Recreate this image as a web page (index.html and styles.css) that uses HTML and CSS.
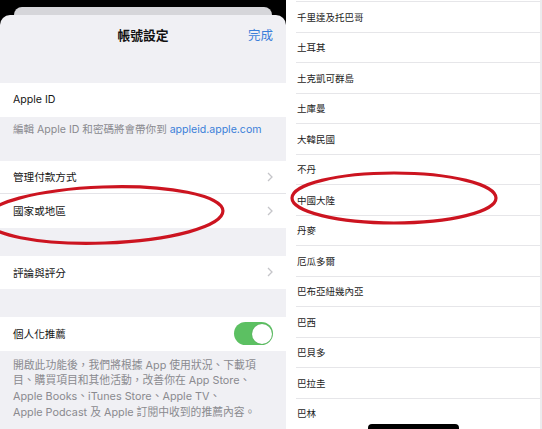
FILE: index.html
```html
<!DOCTYPE html>
<html>
<head>
    <meta charset="UTF-8">
    <title>帳號設定</title>
    <link rel="stylesheet" href="styles.css">
</head>
<body>
    <div class="screen">
        <div class="phone-left">
            <div class="back-card"></div>
            <div class="sheet">
                <div class="nav">
                    <span></span>
                    <span class="nav-title">帳號設定</span>
                    <span class="nav-done">完成</span>
                </div>

                <div class="cell">Apple ID</div>
                <p class="note note-top">編輯 Apple ID 和密碼將會帶你到 <span class="link">appleid.apple.com</span></p>

                <div class="cell cell-split">
                    <span>管理付款方式</span>
                    <svg class="chevron" viewBox="0 0 6 10"><polyline points="1,1 5,5 1,9"/></svg>
                </div>
                <div class="cell">
                    <span>國家或地區</span>
                    <svg class="chevron" viewBox="0 0 6 10"><polyline points="1,1 5,5 1,9"/></svg>
                </div>

                <div class="cell cell-gap">
                    <span>評論與評分</span>
                    <svg class="chevron" viewBox="0 0 6 10"><polyline points="1,1 5,5 1,9"/></svg>
                </div>

                <div class="cell cell-gap">
                    <span>個人化推薦</span>
                    <div class="toggle"><div class="knob"></div></div>
                </div>
                <p class="note note-bottom">開啟此功能後，我們將根據 App 使用狀況、下載項<br>目、購買項目和其他活動，改善你在 App Store、<br>Apple Books、iTunes Store、Apple TV、<br>Apple Podcast 及 Apple 訂閱中收到的推薦內容。</p>
            </div>
        </div>

        <div class="phone-right">
            <div class="list">
                <div class="row">千里達及托巴哥</div>
                <div class="row">土耳其</div>
                <div class="row">土克凱可群島</div>
                <div class="row">土庫曼</div>
                <div class="row">大韓民國</div>
                <div class="row">不丹</div>
                <div class="row">中國大陸</div>
                <div class="row">丹麥</div>
                <div class="row">厄瓜多爾</div>
                <div class="row">巴布亞紐幾內亞</div>
                <div class="row">巴西</div>
                <div class="row">巴貝多</div>
                <div class="row">巴拉圭</div>
                <div class="row">巴林</div>
            </div>
        </div>

        <!-- red marker circles drawn over the screenshots -->
        <svg class="marks" viewBox="0 0 542 429">
            <ellipse cx="104" cy="215" rx="119" ry="28" transform="rotate(-2 104 215)"/>
            <ellipse cx="394" cy="198" rx="102" ry="25"/>
        </svg>
        <div class="home-bar"></div>
    </div>
</body>
</html>
```

FILE: styles.css
```css
body {
    margin: 0;
    background: #fff;
    font-family: 'Inter', 'Noto Sans CJK TC', sans-serif;
}
.screen {
    width: 542px;
    height: 429px;
    display: flex;
    position: relative;
    overflow: hidden;
}
.phone-left {
    width: 286px;
    flex-shrink: 0;
    background: #000;
    display: flex;
    flex-direction: column;
}
.back-card {
    margin: 7px 14px 0;
    height: 8px;
    background: #d6d6da;
    border-radius: 9px 9px 0 0;
}
.sheet {
    flex: 1;
    background: #f0f0f4;
    border-radius: 10px 10px 0 0;
    display: flex;
    flex-direction: column;
}
.nav {
    height: 68px;
    box-sizing: border-box;
    padding: 13px 13px 0;
    display: grid;
    grid-template-columns: 1fr auto 1fr;
    align-items: start;
    line-height: 16px;
}
.nav-title {
    font-size: 12.8px;
    font-weight: bold;
    color: #111;
}
.nav-done {
    justify-self: end;
    font-size: 12.5px;
    color: #3b7fd9;
}
.cell {
    height: 33.5px;
    box-sizing: border-box;
    background: #fff;
    padding: 0 13px;
    display: flex;
    align-items: center;
    justify-content: space-between;
    font-size: 10.6px;
    color: #151515;
}
.cell-split {
    border-bottom: 1px solid #e4e4e8;
    background-clip: padding-box;
}
.cell-gap {
    margin-top: 28px;
}
.chevron {
    width: 6px;
    height: 10px;
    fill: none;
    stroke: #c5c5c9;
    stroke-width: 1.3;
}
.note {
    margin: 0;
    padding: 6px 13px 0;
    color: #8a8a8f;
    white-space: nowrap;
}
.note-top {
    height: 44px;
    box-sizing: border-box;
    font-size: 10.55px;
    line-height: 14px;
}
.note-bottom {
    padding-top: 7px;
    font-size: 10.8px;
    line-height: 15.7px;
}
.link {
    color: #3b7fd9;
}
.toggle {
    width: 39px;
    height: 23px;
    border-radius: 12px;
    background: #5cc062;
    display: flex;
    justify-content: flex-end;
    align-items: center;
    padding: 0 1.5px;
    box-sizing: border-box;
}
.knob {
    width: 20px;
    height: 20px;
    border-radius: 50%;
    background: #fff;
    box-shadow: 0 0 1px rgba(0, 0, 0, 0.25);
}
.phone-right {
    flex: 1;
    background: #fff;
    border-left: 1px solid #fff;
    border-right: 2px solid #ececee;
}
.list {
    padding: 1px 0 0 9px;
}
.row {
    height: 30.5px;
    box-sizing: border-box;
    border-top: 1px solid #e6e6e9;
    padding-left: 1px;
    display: flex;
    align-items: center;
    font-size: 9.5px;
    color: #1c1c1c;
}
.marks {
    position: absolute;
    left: 0;
    top: 0;
    width: 542px;
    height: 429px;
    pointer-events: none;
}
.marks ellipse {
    fill: none;
    stroke: #cc1420;
    stroke-width: 3.2;
}
.home-bar {
    position: absolute;
    left: 368px;
    top: 424px;
    width: 91px;
    height: 8px;
    border-radius: 4px;
    background: #000;
}
```
